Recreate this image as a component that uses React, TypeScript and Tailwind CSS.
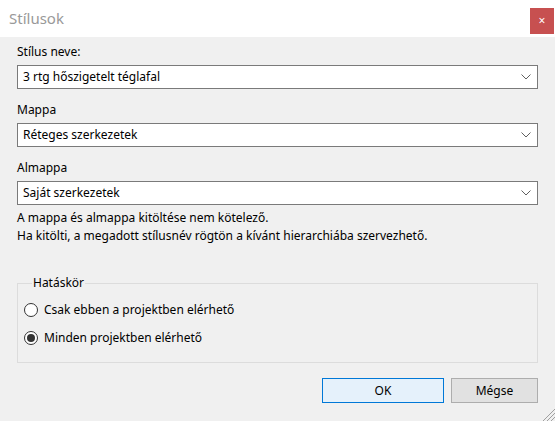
import { useState } from 'react';

const fieldFont = { fontFamily: '"Noto Sans", "Open Sans", Arial, sans-serif' };

function Chevron() {
  return (
    <svg width="10" height="6" viewBox="0 0 10 6" className="shrink-0">
      <path d="M0.5 0.5 L5 5 L9.5 0.5" fill="none" stroke="#606060" strokeWidth="1" />
    </svg>
  );
}

function Combo({ value }: { value: string }) {
  return (
    <div className="flex h-[24px] items-center justify-between border border-[#7a7a7a] bg-white pl-[5px] pr-[6px]">
      <span className="text-[12px] leading-[16px] text-black">{value}</span>
      <Chevron />
    </div>
  );
}

function Radio({ label, checked, onClick }: { label: string; checked: boolean; onClick: () => void }) {
  return (
    <button onClick={onClick} className="flex h-[20px] items-center gap-[6px] text-left">
      <span className="flex h-[14px] w-[14px] items-center justify-center rounded-full border border-[#333333] bg-white">
        {checked && <span className="h-[8px] w-[8px] rounded-full bg-[#333333]" />}
      </span>
      <span className="text-[12px] leading-[16px] text-black">{label}</span>
    </button>
  );
}

export default function App() {
  const [scope, setScope] = useState<'project' | 'all'>('all');

  return (
    <div className="relative flex h-[421px] w-[555px] flex-col bg-[#f0f0f0]" style={fieldFont}>
      {/* title bar */}
      <div className="flex h-[37px] items-start justify-between bg-white">
        <span className="pl-[9px] pt-[8px] text-[15px] leading-[20px] text-[#999999]">Stílusok</span>
        <div className="mr-[1px] mt-[8px] flex h-[26px] w-[24px] items-center justify-center bg-[#c75050] text-[12px] leading-none text-white">
          ×
        </div>
      </div>

      <div className="flex flex-col px-[17px] pt-[7px]">
        <label className="text-[12px] leading-[16px] text-black">Stílus neve:</label>
        <div className="mt-[5px]">
          <Combo value="3 rtg hőszigetelt téglafal" />
        </div>

        <label className="mt-[13px] text-[12px] leading-[16px] text-black">Mappa</label>
        <div className="mt-[5px]">
          <Combo value="Réteges szerkezetek" />
        </div>

        <label className="mt-[13px] text-[12px] leading-[16px] text-black">Almappa</label>
        <div className="mt-[5px]">
          <Combo value="Saját szerkezetek" />
        </div>

        <p className="mt-[4px] text-[12px] leading-[18px] text-black">
          A mappa és almappa kitöltése nem kötelező.
          <br />
          Ha kitölti, a megadott stílusnév rögtön a kívánt hierarchiába szervezhető.
        </p>

        <fieldset className="mt-[30px] border border-[#dcdcdc] pb-[14px] pl-[6px]">
          <legend className="ml-[8px] px-[1px] text-[12px] leading-[16px] text-black">Hatáskör</legend>
          <div className="flex flex-col gap-[8px] pt-[9px]">
            <Radio
              label="Csak ebben a projektben elérhető"
              checked={scope === 'project'}
              onClick={() => setScope('project')}
            />
            <Radio
              label="Minden projektben elérhető"
              checked={scope === 'all'}
              onClick={() => setScope('all')}
            />
          </div>
        </fieldset>

        <div className="mt-[15px] flex justify-end gap-[7px]">
          <button className="h-[25px] w-[122px] border border-[#0078d7] bg-[#e5f1fb] text-[12px] text-black">OK</button>
          <button className="h-[25px] w-[87px] border border-[#adadad] bg-[#e1e1e1] text-[12px] text-black">Mégse</button>
        </div>
      </div>

      {/* size grip */}
      <svg width="13" height="13" viewBox="0 0 13 13" className="absolute bottom-0 right-0">
        <path d="M13 1 L1 13 M13 5 L5 13 M13 9 L9 13" stroke="#a0a0a0" strokeWidth="1" />
      </svg>
    </div>
  );
}
